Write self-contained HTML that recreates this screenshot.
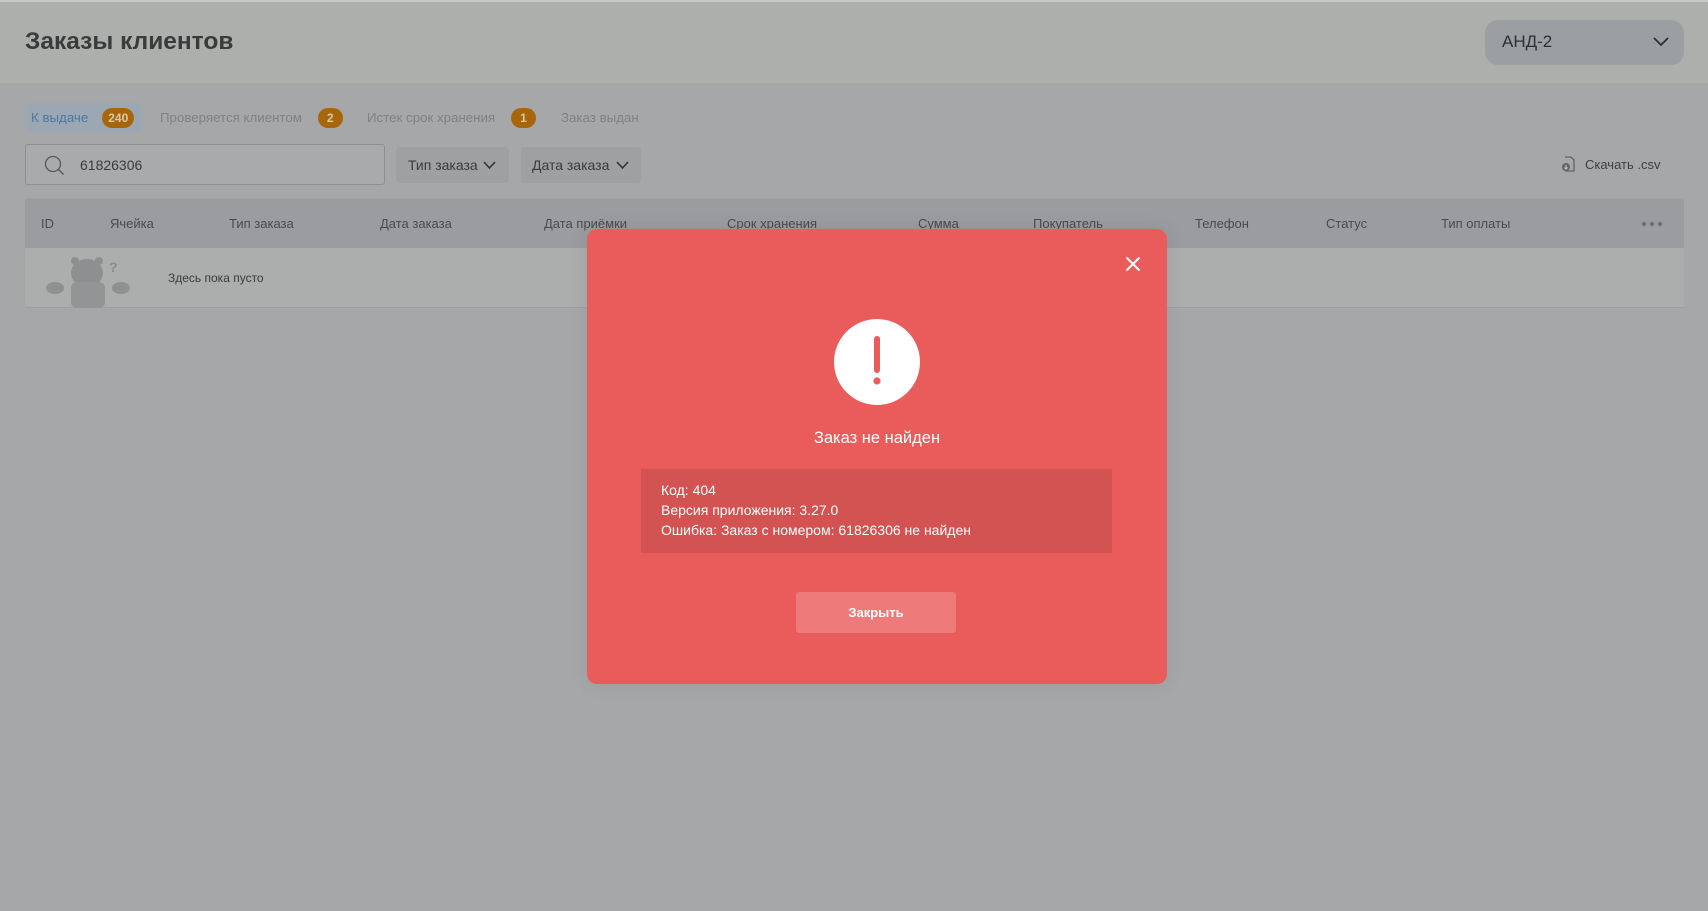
<!DOCTYPE html>
<html><head><meta charset="utf-8"><style>
*{box-sizing:border-box;margin:0;padding:0}
body{width:1708px;height:911px;overflow:hidden;background:#a6a7a9;font-family:"Liberation Sans","Noto Sans CJK SC",sans-serif;position:relative;color:#3b3c3d}
.abs{position:absolute}
.hdr{left:0;top:0;width:1708px;height:83px;background:#adafad;border-top:2px solid #c8c8c8}
.title{left:25px;top:28px;font-size:24.5px;font-weight:bold;color:#3a3b3b}
.dd{left:1485px;top:20px;width:199px;height:45px;background:#9c9fa2;border-radius:13px;font-size:17px;padding:12px 0 0 17px;color:#2e2f30}
.tab{top:103px;height:29px;font-size:13.3px;color:#7f8183;line-height:29px}
.badge{display:inline-block;background:#a8660a;color:#d9c8a8;border-radius:10px;font-size:12px;font-weight:bold;height:20px;line-height:20px;padding:0 9px;margin-left:16px;vertical-align:middle}
.search{left:25px;top:144px;width:360px;height:41px;border:1px solid #8d8f91;border-radius:3px;background:#a9aaab;font-size:14px;padding:12px 0 0 54px;color:#3b3c3d}
.btn{top:147px;height:36px;background:#9ea0a2;border-radius:4px;font-size:14px;line-height:36px;padding-left:12px;color:#3a3b3c}
.th{left:25px;top:198px;width:1659px;height:50px;background:#9a9ca0;border-top:1px solid #9fa2a4}
.row{left:25px;top:248px;width:1659px;height:60px;background:#acadad;border-bottom:1px solid #9d9fa1}
.col{top:216px;font-size:13px;color:#4a4b4d}
.modal{left:587px;top:229px;width:580px;height:455px;background:#ea5c5b;border-radius:10px;box-shadow:0 0 20px rgba(0,0,0,.08)}
.info{left:54px;top:240px;width:471px;height:84px;background:#d35252;color:#fff;font-size:14px;padding:11px 0 0 20px;line-height:20px}
.cl{left:209px;top:363px;width:160px;height:41px;background:#ee7b7a;border-radius:3px;color:#fff;font-weight:bold;font-size:13px;text-align:center;line-height:41px}
</style></head><body>
<div class="abs hdr"></div>
<div class="abs title">Заказы клиентов</div>
<div class="abs dd">АНД-2<svg class="abs" style="left:168px;top:17px" width="16" height="10" viewBox="0 0 16 10"><path d="M1 1l7 7 7-7" stroke="#2e2f30" stroke-width="1.8" fill="none"/></svg></div>

<div class="abs tab" style="left:25px;width:117px;background:#9ba7b3;border-radius:7px;padding-left:6px;color:#4f78a4">К выдаче<span class="badge" style="margin-left:14px;padding:0 6px">240</span></div>
<div class="abs tab" style="left:160px">Проверяется клиентом<span class="badge">2</span></div>
<div class="abs tab" style="left:367px">Истек срок хранения<span class="badge">1</span></div>
<div class="abs tab" style="left:561px">Заказ выдан</div>

<div class="abs search">61826306</div>
<svg class="abs" style="left:44px;top:155px" width="22" height="22" viewBox="0 0 22 22"><circle cx="9" cy="9" r="7.5" stroke="#55575a" stroke-width="1.3" fill="none"/><path d="M14.5 14.5l5 5" stroke="#55575a" stroke-width="1.3"/></svg>
<div class="abs btn" style="left:396px;width:113px">Тип заказа<svg class="abs" style="left:87px;top:14px" width="13" height="9" viewBox="0 0 13 9"><path d="M1 1l5.5 6 5.5-6" stroke="#333" stroke-width="1.6" fill="none"/></svg></div>
<div class="abs btn" style="left:521px;width:120px;padding-left:11px">Дата заказа<svg class="abs" style="left:95px;top:14px" width="13" height="9" viewBox="0 0 13 9"><path d="M1 1l5.5 6 5.5-6" stroke="#333" stroke-width="1.6" fill="none"/></svg></div>
<svg class="abs" style="left:1561px;top:156px" width="14" height="16" viewBox="0 0 14 16"><path d="M4 1h6l3 3v11H4" stroke="#555" stroke-width="1.1" fill="none"/><circle cx="5" cy="11" r="4" fill="#666"/><path d="M5 9v4M3.5 11.5L5 13l1.5-1.5" stroke="#ccc" stroke-width="1"/></svg>
<div class="abs" style="left:1585px;top:157px;font-size:13px;color:#3e4042">Скачать .csv</div>

<div class="abs th"></div>
<div class="abs row"></div>
<div class="abs col" style="left:41px">ID</div>
<div class="abs col" style="left:110px">Ячейка</div>
<div class="abs col" style="left:229px">Тип заказа</div>
<div class="abs col" style="left:380px">Дата заказа</div>
<div class="abs col" style="left:544px">Дата приёмки</div>
<div class="abs col" style="left:727px">Срок хранения</div>
<div class="abs col" style="left:918px">Сумма</div>
<div class="abs col" style="left:1033px">Покупатель</div>
<div class="abs col" style="left:1195px">Телефон</div>
<div class="abs col" style="left:1326px">Статус</div>
<div class="abs col" style="left:1441px">Тип оплаты</div>
<svg class="abs" style="left:1641px;top:221px" width="22" height="6"><circle cx="3" cy="3" r="2.2" fill="#6e7073"/><circle cx="11" cy="3" r="2.2" fill="#6e7073"/><circle cx="19" cy="3" r="2.2" fill="#6e7073"/></svg>
<svg class="abs" style="left:43px;top:256px" width="90" height="52" viewBox="0 0 90 52"><ellipse cx="44" cy="17" rx="16" ry="14" fill="#8e8f90"/><circle cx="32" cy="5" r="4" fill="#8e8f90"/><circle cx="56" cy="5" r="4" fill="#8e8f90"/><rect x="28" y="26" width="34" height="26" rx="6" fill="#939495"/><ellipse cx="12" cy="32" rx="9" ry="6" fill="#8f9091"/><ellipse cx="78" cy="32" rx="9" ry="6" fill="#8f9091"/><text x="66" y="16" font-size="14" font-weight="bold" fill="#8a8b8c" font-family="Liberation Sans">?</text></svg>
<div class="abs" style="left:168px;top:271px;font-size:12px;color:#3b3c3d">Здесь пока пусто</div>

<div class="abs modal">
<svg class="abs" style="left:538px;top:27px" width="16" height="16" viewBox="0 0 16 16"><path d="M1.5 1.5l13 13M14.5 1.5l-13 13" stroke="#fff" stroke-width="2"/></svg>
<svg class="abs" style="left:247px;top:90px" width="86" height="86" viewBox="0 0 86 86"><circle cx="43" cy="43" r="43" fill="#fff"/><rect x="40" y="17" width="6" height="37" rx="3" fill="#ea5c5b"/><circle cx="43" cy="62" r="3.6" fill="#ea5c5b"/></svg>
<div class="abs" style="left:0;width:580px;top:200px;text-align:center;color:#fff;font-size:16.5px">Заказ не найден</div>
<div class="abs info">Код: 404<br>Версия приложения: 3.27.0<br>Ошибка: Заказ с номером: 61826306 не найден</div>
<div class="abs cl">Закрыть</div>
</div>
</body></html>
